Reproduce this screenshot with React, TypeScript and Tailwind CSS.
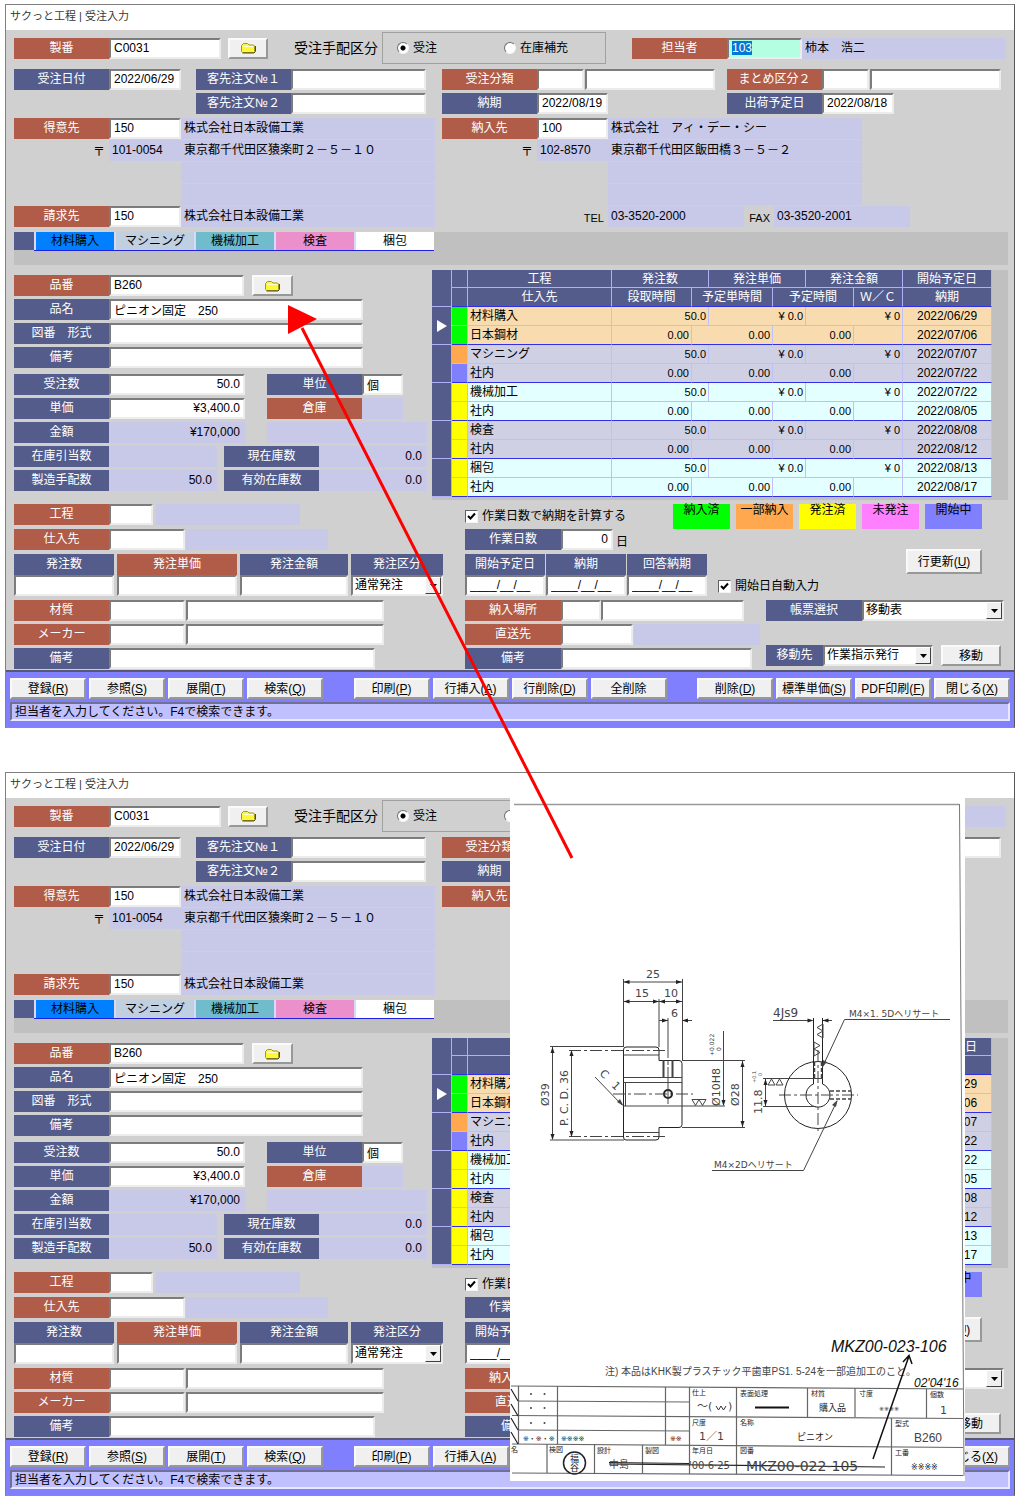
import React, { useEffect, useId, useRef } from 'react';
import clsx from 'clsx';

type Tone = 'navy' | 'red';

const sunken = 'border-2 border-t-[#7c7c7c] border-l-[#7c7c7c] border-r-[#ececec] border-b-[#ececec]';
const raised = 'border-2 border-t-[#fafafa] border-l-[#fafafa] border-r-[#989898] border-b-[#989898]';

const toneClass: Record<Tone, string> = {
  navy: 'bg-[#545c8c]',
  red: 'bg-[#b05c48]',
};

interface BoxProps {
  id?: string;
  name: string;
  value?: string;
  className?: string;
  bg?: string;
}

const Box: React.FC<BoxProps> = ({ id, name, value = '', className, bg = 'bg-white' }) => (
  <input
    id={id}
    aria-label={id ? undefined : name}
    type="text"
    defaultValue={value}
    className={clsx('h-[21px] min-w-0 px-[3px] pb-px text-xs text-black outline-none', sunken, bg, className)}
  />
);

interface FieldProps {
  label: string;
  tone?: Tone;
  value?: string;
  box: string;
  labelWidth?: string;
}

const Field: React.FC<FieldProps> = ({ label, tone = 'navy', value, box, labelWidth = 'w-[95px]' }) => {
  const id = useId();
  return (
    <div className="flex">
      <label
        htmlFor={id}
        className={clsx('flex h-[21px] shrink-0 items-center justify-center pb-px text-white', labelWidth, toneClass[tone])}
      >
        {label}
      </label>
      <Box id={id} name={label} value={value} className={box} />
    </div>
  );
};

const Caption: React.FC<{ tone?: Tone; className?: string; children: React.ReactNode }> = ({
  tone = 'navy',
  className = 'w-[95px]',
  children,
}) => (
  <span className={clsx('flex h-[21px] shrink-0 items-center justify-center pb-px text-white', toneClass[tone], className)}>
    {children}
  </span>
);

const Readout: React.FC<{ className: string; children?: React.ReactNode }> = ({ className, children }) => (
  <span className={clsx('flex h-[21px] items-center bg-[#c8c8e8] pr-[5px] pb-px pl-[3px] whitespace-pre', className)}>
    {children}
  </span>
);

const Button: React.FC<{ className: string; label?: string; children: React.ReactNode }> = ({
  className,
  label,
  children,
}) => (
  <button
    type="button"
    aria-label={label}
    className={clsx('flex shrink-0 items-center justify-center bg-[#f0f0f0] whitespace-nowrap text-black', raised, className)}
  >
    {children}
  </button>
);

const FolderIcon = () => (
  <svg width="15" height="12" viewBox="0 0 15 12">
    <path d="M.5 3.500 2.500 1.500h4l1.500 1.500h4.500l1 1v5.500l-1 1h-11l-1-1z" fill="#fff838" stroke="#a09818" />
    <path d="M1.500 11h11.500l1.500-1.500V4" fill="none" stroke="#50501c" />
    <path d="M2 4.500h10" stroke="#ffffd8" />
  </svg>
);

const Radio: React.FC<{ name: string; label: string; checked?: boolean }> = ({ name, label, checked }) => (
  <label className="flex items-center gap-1">
    <input
      type="radio"
      name={name}
      defaultChecked={checked}
      className="size-3 appearance-none rounded-full border border-t-[#707070] border-l-[#707070] border-r-[#f4f4f4] border-b-[#f4f4f4] bg-white checked:bg-[radial-gradient(circle,#000_0_2px,#fff_3px)]"
    />
    {label}
  </label>
);

const Check: React.FC<{ label: string }> = ({ label }) => (
  <label className="flex items-center gap-1">
    <span className="grid">
      <input
        type="checkbox"
        defaultChecked
        className="col-start-1 row-start-1 size-[13px] appearance-none border border-t-[#606060] border-l-[#606060] border-r-[#f4f4f4] border-b-[#f4f4f4] bg-white"
      />
      <svg className="pointer-events-none col-start-1 row-start-1" width="13" height="13" viewBox="0 0 13 13">
        <path d="M3 6 5.500 8.500l4.500-5" fill="none" stroke="#000" strokeWidth="2" />
      </svg>
    </span>
    {label}
  </label>
);

const Combo: React.FC<{ id?: string; name: string; value: string; className: string }> = ({
  id,
  name,
  value,
  className,
}) => (
  <span className={clsx('relative block', className)}>
    <select
      id={id}
      aria-label={id ? undefined : name}
      className={clsx('block h-[21px] w-full appearance-none bg-white pr-5 pb-px pl-[2px] text-xs outline-none', sunken)}
    >
      <option>{value}</option>
    </select>
    <span
      className={clsx(
        'pointer-events-none absolute top-[2px] right-[2px] flex h-[17px] w-4 items-center justify-center bg-[#f0f0f0]',
        'border border-t-white border-l-white border-r-[#404040] border-b-[#404040]',
      )}
    >
      <svg width="7" height="4" viewBox="0 0 7 4">
        <path d="M0 0h7L3.5 4z" />
      </svg>
    </span>
  </span>
);

const ComboField: React.FC<{ label: string; labelWidth: string; value: string; className: string }> = ({
  label,
  labelWidth,
  value,
  className,
}) => {
  const id = useId();
  return (
    <div className="flex min-w-0">
      <label
        htmlFor={id}
        className={clsx('flex h-[21px] shrink-0 items-center justify-center bg-[#545c8c] pb-px text-white', labelWidth)}
      >
        {label}
      </label>
      <Combo id={id} name={label} value={value} className={className} />
    </div>
  );
};

const StaffField: React.FC<{ active?: boolean }> = ({ active }) => {
  const id = useId();
  const ref = useRef<HTMLInputElement>(null);

  useEffect(() => {
    if (active) ref.current?.select();
  }, [active]);

  return (
    <div className="flex">
      <label htmlFor={id} className="flex h-[21px] w-[95px] items-center justify-center bg-[#b05c48] pb-px text-white">
        担当者
      </label>
      <input
        id={id}
        ref={ref}
        type="text"
        autoFocus={active}
        defaultValue="103"
        className={clsx(
          'h-[21px] w-[75px] bg-[#b4ffe4] px-[3px] pb-px text-xs outline-none selection:bg-[#0078d7] selection:text-white',
          sunken,
        )}
      />
    </div>
  );
};

const tabs = [
  { name: '材料購入', color: 'bg-[#0080ff]' },
  { name: 'マシニング', color: 'bg-[#c0d0e0]' },
  { name: '機械加工', color: 'bg-[#70bccc]' },
  { name: '検査', color: 'bg-[#ec90cc]' },
  { name: '梱包', color: 'bg-white' },
];

const steps = [
  { name: '材料購入', vendor: '日本鋼材', start: '2022/06/29', due: '2022/07/06', a: 'bg-[#00ff00]', b: 'bg-[#00ff00]', row: 'bg-[#f8dcb0]' },
  { name: 'マシニング', vendor: '社内', start: '2022/07/07', due: '2022/07/22', a: 'bg-[#ffa850]', b: 'bg-[#8080ff]', row: 'bg-[#d0d0e4]' },
  { name: '機械加工', vendor: '社内', start: '2022/07/22', due: '2022/08/05', a: 'bg-[#ffff00]', b: 'bg-[#ffff00]', row: 'bg-[#e4ffff]' },
  { name: '検査', vendor: '社内', start: '2022/08/08', due: '2022/08/12', a: 'bg-[#ffff00]', b: 'bg-[#ffff00]', row: 'bg-[#d0d0e4]' },
  { name: '梱包', vendor: '社内', start: '2022/08/13', due: '2022/08/17', a: 'bg-[#ffff00]', b: 'bg-[#ffff00]', row: 'bg-[#e4ffff]' },
];

const legend = [
  { name: '納入済', color: 'bg-[#00ff00]' },
  { name: '一部納入', color: 'bg-[#ffa850]' },
  { name: '発注済', color: 'bg-[#ffff00]' },
  { name: '未発注', color: 'bg-[#ff80ff]' },
  { name: '開始中', color: 'bg-[#8080ff]' },
];

const commands = [
  [['登録', 'R'], ['参照', 'S'], ['展開', 'T'], ['検索', 'Q']],
  [['印刷', 'P'], ['行挿入', 'A'], ['行削除', 'D'], ['全削除', '']],
  [['削除', 'D'], ['標準単価', 'S'], ['PDF印刷', 'F'], ['閉じる', 'X']],
];

const StepTable = () => {
  const th = 'border-r border-b border-[#b0b0f8] p-0 font-normal whitespace-nowrap';
  const thLast = 'border-r border-b border-r-[#b0b0f8] border-b-[#3030e8] p-0 font-normal whitespace-nowrap';
  const top = 'border-r border-b border-[#c0c0f8] py-0';
  const bottom = 'border-r border-b border-r-[#c0c0f8] border-b-[#3030e8] py-0';
  const num = 'pr-[2px] pl-0 text-right text-[11px]';
  return (
    <table className="w-full table-fixed border-separate border-spacing-0 leading-4">
      <colgroup>
        <col className="w-[20px]" />
        <col className="w-[16px]" />
        <col className="w-[144px]" />
        <col className="w-[80px]" />
        <col className="w-[17px]" />
        <col className="w-[64px]" />
        <col className="w-[33px]" />
        <col className="w-[48px]" />
        <col className="w-[49px]" />
        <col className="w-[89px]" />
      </colgroup>
      <thead className="bg-[#545c8c] text-white">
        <tr className="h-[18px]">
          <th rowSpan={2} className={th} />
          <th className={th} />
          <th className={th}>工程</th>
          <th colSpan={2} className={th}>発注数</th>
          <th colSpan={2} className={th}>発注単価</th>
          <th colSpan={2} className={th}>発注金額</th>
          <th className={th}>開始予定日</th>
        </tr>
        <tr className="h-[19px]">
          <th className={thLast} />
          <th className={thLast}>仕入先</th>
          <th className={thLast}>段取時間</th>
          <th colSpan={2} className={thLast}>予定単時間</th>
          <th colSpan={2} className={thLast}>予定時間</th>
          <th className={thLast}>Ｗ／Ｃ</th>
          <th className={thLast}>納期</th>
        </tr>
      </thead>
      {steps.map((s, i) => (
        <tbody key={s.name} className={s.row}>
          <tr className="h-[19px]">
            <td rowSpan={2} className="border-r border-b border-[#b0b0f8] bg-[#545c8c] p-0">
              {i === 0 && (
                <svg className="mx-auto" width="10" height="12" viewBox="0 0 10 12">
                  <path d="M0 0l10 6-10 6z" fill="#fff" />
                </svg>
              )}
            </td>
            <td className={clsx(top, s.a)} />
            <td className={clsx(top, 'px-[2px]')}>{s.name}</td>
            <td colSpan={2} className={clsx(top, num)}>50.0</td>
            <td colSpan={2} className={clsx(top, num)}>¥ 0.0</td>
            <td colSpan={2} className={clsx(top, num)}>¥ 0</td>
            <td className={clsx(top, 'px-0 text-center')}>{s.start}</td>
          </tr>
          <tr className="h-[19px]">
            <td className={clsx(bottom, s.b)} />
            <td className={clsx(bottom, 'px-[2px]')}>{s.vendor}</td>
            <td className={clsx(bottom, num)}>0.00</td>
            <td colSpan={2} className={clsx(bottom, num)}>0.00</td>
            <td colSpan={2} className={clsx(bottom, num)}>0.00</td>
            <td className={bottom} />
            <td className={clsx(bottom, 'px-0 text-center')}>{s.due}</td>
          </tr>
        </tbody>
      ))}
    </table>
  );
};

const OrderWindow: React.FC<{ active?: boolean; children?: React.ReactNode }> = ({ active, children }) => {
  const group = useId();
  return (
    <section className="relative border border-t-[#808080] border-r-[#585858] border-b-[#909090] border-l-[#808080] bg-[#d0d0d0]">
      <header className="flex h-[25px] items-center bg-white pb-1 pl-1 text-[11px] text-[#383838]">
        サクっと工程 | 受注入力
      </header>

      <form className="pt-[2px] pr-[6px] pl-2" onSubmit={(e) => e.preventDefault()}>
        <div className="mr-[3px] flex items-center">
          <Field label="製番" tone="red" value="C0031" box="w-[112px]" />
          <Button label="製番検索" className="ml-[7px] h-[21px] w-10">
            <FolderIcon />
          </Button>
          <span className="ml-[26px] text-sm">受注手配区分</span>
          <div className="ml-1 flex h-8 w-[224px] items-center gap-[67px] border border-[#a0a0a0] pl-[14px]">
            <Radio name={group} label="受注" checked />
            <Radio name={group} label="在庫補充" />
          </div>
          <div className="ml-[26px] flex flex-1">
            <StaffField active={active} />
            <Readout className="flex-1">柿本　浩二</Readout>
          </div>
        </div>

        <div className="mt-[5px] grid grid-cols-[428px_minmax(0,1fr)]">
          <div className="flex flex-col gap-[3px]">
            <div className="flex gap-[15px]">
              <Field label="受注日付" value="2022/06/29" box="w-[72px]" />
              <Field label="客先注文№１" box="w-[135px]" />
            </div>
            <div className="pl-[182px]">
              <Field label="客先注文№２" box="w-[135px]" />
            </div>
          </div>
          <div className="grid grid-cols-[285px_minmax(0,1fr)] gap-y-[3px]">
            <div className="flex gap-px">
              <Field label="受注分類" tone="red" box="w-[47px]" />
              <Box name="受注分類名" className="w-[130px]" />
            </div>
            <div className="mr-[7px] flex gap-px">
              <Field label="まとめ区分２" tone="red" box="w-[47px]" />
              <Box name="まとめ区分名" className="flex-1" />
            </div>
            <Field label="納期" value="2022/08/19" box="w-[71px]" />
            <Field label="出荷予定日" value="2022/08/18" box="w-[72px]" />
          </div>
        </div>

        <div className="mt-1 grid grid-cols-[428px_1fr]">
          <div className="flex flex-col gap-px">
            <div className="flex">
              <Field label="得意先" tone="red" value="150" box="w-[72px]" />
              <Readout className="w-[254px]">株式会社日本設備工業</Readout>
            </div>
            <div className="flex">
              <span className="w-[95px] pt-1 pr-1 text-right">〒</span>
              <Readout className="w-[72px]">101-0054</Readout>
              <Readout className="w-[254px]">東京都千代田区猿楽町２－５－１０</Readout>
            </div>
            <Readout className="ml-[167px] w-[254px]" />
            <Readout className="ml-[167px] w-[254px]" />
            <div className="flex">
              <Field label="請求先" tone="red" value="150" box="w-[72px]" />
              <Readout className="w-[254px]">株式会社日本設備工業</Readout>
            </div>
          </div>
          <div className="flex flex-col gap-px">
            <div className="flex">
              <Field label="納入先" tone="red" value="100" box="w-[71px]" />
              <Readout className="w-[254px]">株式会社　アィ・デー・シー</Readout>
            </div>
            <div className="flex">
              <span className="w-[95px] pt-1 pr-1 text-right">〒</span>
              <Readout className="w-[71px]">102-8570</Readout>
              <Readout className="w-[254px]">東京都千代田区飯田橋３－５－２</Readout>
            </div>
            <Readout className="ml-[166px] w-[254px]" />
            <Readout className="ml-[166px] w-[254px]" />
            <div className="flex">
              <span className="w-[166px] pt-1 pr-1 text-right text-[11px]">TEL</span>
              <Readout className="w-[136px]">03-3520-2000</Readout>
              <span className="w-[30px] pt-1 pr-1 text-right text-[11px]">FAX</span>
              <Readout className="w-[136px]">03-3520-2001</Readout>
            </div>
          </div>
        </div>

        <div className="mt-[5px] flex h-[33px] items-start bg-[#c0c0c0]">
          <span className="h-[18px] w-5 bg-[#545c8c]" />
          <div className="flex border-b border-[#2020e0]">
            {tabs.map((t) => (
              <button
                key={t.name}
                type="button"
                className={clsx('h-[18px] w-20 border-l-2 border-[#d8d8f8] leading-[17px]', t.color)}
              >
                {t.name}
              </button>
            ))}
          </div>
        </div>

        <div className="mt-[5px] grid grid-cols-[418px_1fr]">
          <div className="flex flex-col gap-[3px] pt-[5px]">
            <div className="flex gap-2">
              <Field label="品番" tone="red" value="B260" box="w-[135px]" />
              <Button label="品番検索" className="h-[21px] w-[41px]">
                <FolderIcon />
              </Button>
            </div>
            <Field label="品名" value="ピニオン固定　250" box="w-[254px]" />
            <Field label="図番　形式" box="w-[254px]" />
            <Field label="備考" box="w-[254px]" />
            <div className="mt-[3px] flex gap-[22px]">
              <Field label="受注数" value="50.0" box="w-[136px] text-right" />
              <Field label="単位" value="個" box="w-[41px]" />
            </div>
            <div className="flex gap-[22px]">
              <Field label="単価" value="¥3,400.0" box="w-[136px] text-right" />
              <div className="flex">
                <Caption tone="red">倉庫</Caption>
                <Readout className="w-[41px]" />
              </div>
            </div>
            <div className="flex">
              <Caption>金額</Caption>
              <Readout className="w-[136px] justify-end">¥170,000</Readout>
              <Readout className="ml-[22px] w-[160px]" />
            </div>
            <div className="flex">
              <Caption>在庫引当数</Caption>
              <Readout className="w-[108px]" />
              <Caption className="ml-[7px] w-[95px]">現在庫数</Caption>
              <Readout className="w-[108px] justify-end">0.0</Readout>
            </div>
            <div className="flex">
              <Caption>製造手配数</Caption>
              <Readout className="w-[108px] justify-end">50.0</Readout>
              <Caption className="ml-[7px] w-[95px]">有効在庫数</Caption>
              <Readout className="w-[108px] justify-end">0.0</Readout>
            </div>
          </div>
          <div className="h-[230px] bg-[#c0c0c0] pr-4">
            <StepTable />
          </div>
        </div>

        <div className="mt-1 grid grid-cols-[451px_1fr] pb-px">
          <div className="flex flex-col">
            <div className="flex gap-[3px]">
              <Field label="工程" tone="red" box="w-[44px]" />
              <Readout className="w-[144px]" />
            </div>
            <div className="mt-1 flex gap-px">
              <Field label="仕入先" tone="red" box="w-[76px]" />
              <Readout className="w-[142px]" />
            </div>
            <div className="mt-1 grid grid-cols-[100px_120px_108px_92px] gap-x-[3px]">
              <Caption className="w-full">発注数</Caption>
              <Caption tone="red" className="w-full">発注単価</Caption>
              <Caption className="w-full">発注金額</Caption>
              <Caption className="w-full">発注区分</Caption>
              <Box name="発注数" />
              <Box name="発注単価" />
              <Box name="発注金額" />
              <Combo name="発注区分" value="通常発注" className="w-[92px]" />
            </div>
            <div className="mt-1 flex gap-px">
              <Field label="材質" tone="red" box="w-[76px]" />
              <Box name="材質名" className="w-[198px]" />
            </div>
            <div className="mt-[3px] flex gap-px">
              <Field label="メーカー" tone="red" box="w-[76px]" />
              <Box name="メーカー名" className="w-[198px]" />
            </div>
            <div className="mt-[3px]">
              <Field label="備考" box="w-[266px]" />
            </div>
          </div>

          <div className="flex flex-col">
            <div className="flex h-[25px] items-start justify-between pr-[26px]">
              <div className="pt-1">
                <Check label="作業日数で納期を計算する" />
              </div>
              <ul className="flex gap-[6px]">
                {legend.map((l) => (
                  <li key={l.name} className={clsx('h-[25px] w-[57px] text-center leading-[13px]', l.color)}>
                    {l.name}
                  </li>
                ))}
              </ul>
            </div>
            <div className="flex items-start justify-between pr-[26px]">
              <div className="flex flex-col gap-1">
                <div className="flex items-end gap-[3px]">
                  <Field label="作業日数" value="0" labelWidth="w-[96px]" box="w-[52px] text-right" />
                  <span>日</span>
                </div>
                <div className="flex items-end gap-[11px]">
                  <div className="grid grid-cols-[80px_80px_80px] gap-x-px">
                    <Caption className="w-full">開始予定日</Caption>
                    <Caption className="w-full">納期</Caption>
                    <Caption className="w-full">回答納期</Caption>
                    <Box name="開始予定日" value="____/__/__" />
                    <Box name="納期" value="____/__/__" />
                    <Box name="回答納期" value="____/__/__" />
                  </div>
                  <div className="pb-[2px]">
                    <Check label="開始日自動入力" />
                  </div>
                </div>
              </div>
              <Button className="mt-5 h-[25px] w-[76px]">
                行更新(<u>U</u>)
              </Button>
            </div>
            <div className="mt-1 flex justify-between">
              <div className="flex flex-col gap-[3px]">
                <div className="flex">
                  <Field label="納入場所" tone="red" labelWidth="w-[96px]" box="w-[40px]" />
                  <Box name="納入場所名" className="w-[143px]" />
                </div>
                <div className="flex gap-px">
                  <Field label="直送先" tone="red" labelWidth="w-[96px]" box="w-[72px]" />
                  <Readout className="w-[126px]" />
                </div>
                <Field label="備考" labelWidth="w-[96px]" box="w-[191px]" />
              </div>
              <div className="mr-1 ml-[6px] flex flex-1 flex-col gap-6">
                <ComboField label="帳票選択" labelWidth="w-[96px]" value="移動表" className="flex-1" />
                <div className="flex justify-between">
                  <ComboField label="移動先" labelWidth="w-[57px]" value="作業指示発行" className="w-[110px]" />
                  <Button className="mr-[3px] h-[21px] w-[60px]">移動</Button>
                </div>
              </div>
            </div>
          </div>
        </div>
      </form>

      <footer className="border-t-2 border-[#585870] bg-[#8080ff] px-1 pt-[6px] pb-[6px]">
        <div className="flex justify-between">
          {commands.map((set, i) => (
            <div key={i} className="flex gap-[3px]">
              {set.map(([name, key]) => (
                <Button key={name} className="h-[21px] w-[76px]">
                  {name}
                  {key && (
                    <>
                      (<u>{key}</u>)
                    </>
                  )}
                </Button>
              ))}
            </div>
          ))}
        </div>
        <p className="mt-[3px] flex h-[19px] items-center border-2 border-t-[#707090] border-r-[#e8e8ff] border-b-[#e8e8ff] border-l-[#707090] bg-[#c0c0ff] pl-[3px]">
          担当者を入力してください。F4で検索できます。
        </p>
      </footer>
      {children}
    </section>
  );
};

const Arrow: React.FC<{ x: number; y: number; dir: 'l' | 'r' | 'u' | 'd' }> = ({ x, y, dir }) => {
  const angle = { r: 0, d: 90, l: 180, u: 270 }[dir];
  return <path d="M0 0-6-2v4z" fill="#222" stroke="none" transform={`translate(${x} ${y}) rotate(${angle})`} />;
};

const Up: React.FC<{ x: number; y: number; size?: number; children: React.ReactNode }> = ({ x, y, size = 11, children }) => (
  <text transform={`translate(${x} ${y}) rotate(-90)`} fontSize={size}>
    {children}
  </text>
);

// Part drawing of the pinion, with its title block
const PartDrawing = () => (
  <svg
    className="absolute top-[24px] left-[504px] bg-white"
    width="455"
    height="684"
    viewBox="510 797 455 684"
    fontFamily='"DejaVu Sans", "Noto Sans CJK JP", sans-serif'
    fontSize="11"
    fill="#444"
  >
    <g fill="none" stroke="#444" strokeWidth="1">
      <path d="M514 804.5H959" stroke="#999" strokeWidth="1.5" />
      <path d="M959.5 804 961.5 1100 962.5 1250 964 1476" stroke="#777" />

      {/* side view */}
      <path d="M626 1047H656q3 0 3 3V1060.500H679q3 0 3 3V1124.500q0 3-3 3H659V1137q0 3-3 3H626q-2.500 0-2.500-3V1050q0-3 2.500-3z" stroke="#222" />
      <path d="M623.500 1055H659M623.500 1132.500H659M623.500 1077.500H682M623.500 1082.500H682M625.500 1082.500V1106M623.500 1106H725" />
      <path d="M663.500 1060V1077.500M672.500 1060V1077.500" strokeWidth="2" />
      <circle cx="668" cy="1094" r="4" stroke="#222" strokeWidth="2" />
      <path d="M613 1094H693M569 1050.500H666M569 1136.500H666" strokeDasharray="12 3 3 3" />
      <path d="M668 1018V1104" strokeDasharray="40 2 5 2" />

      {/* dimensions */}
      <path d="M623.500 979V1047M682.500 979V1060M659 999V1047" />
      <path d="M623.500 982H682M623.500 1001.500H682M659 1020.500H668M682 1020.500H692" />
      <path d="M550 1046.500H624M550 1140H624M552.500 1047V1139M571.500 1051V1136" />
      <path d="M595 1077 622 1105M723.500 1031V1105M682 1060.500H745M682 1127.500H745M742.500 1061V1127" />

      {/* front view */}
      <circle cx="818" cy="1095" r="33.500" stroke="#222" />
      <path d="M813.500 1084V1018M822.500 1084V1018M813.500 1084A12 12 0 1 0 822.500 1084" stroke="#222" />
      <path d="M779 1095H858M818 1050V1134" strokeDasharray="12 3 3 3" />
      <path d="M814.500 1062V1078M821.500 1062V1078M830 1091H851M830 1099H851" strokeWidth="1.5" strokeDasharray="4 2" />
      <path d="M773 1020.500H812M823 1020.500H832M763 1078.500H823M763 1106.500H816M765.500 1079V1106" />
      <path d="M950 1019.500H844.500L822.500 1067M712 1170.500H803.500L837 1101" />

      {/* surface marks */}
      <path d="M692 1099.500h7l-3.500 6zM699 1099.500h7l-3.500 6zM768 1085h7l-3.500-6zM776 1085h7l-3.500-6z" />
      <path d="M823 1024v7l-6-3.500zM823 1031v7l-6-3.500zM814 1042v7l6-3.500zM814 1049v7l6-3.500z" />
    </g>

    <Arrow x={623.5} y={982} dir="l" />
    <Arrow x={682} y={982} dir="r" />
    <Arrow x={623.5} y={1001.5} dir="l" />
    <Arrow x={659} y={1001.5} dir="r" />
    <Arrow x={659} y={1001.5} dir="l" />
    <Arrow x={682} y={1001.5} dir="r" />
    <Arrow x={668} y={1020.5} dir="r" />
    <Arrow x={682} y={1020.5} dir="l" />
    <Arrow x={552.5} y={1047} dir="u" />
    <Arrow x={552.5} y={1140} dir="d" />
    <Arrow x={571.5} y={1050} dir="u" />
    <Arrow x={571.5} y={1137} dir="d" />
    <Arrow x={723.5} y={1106} dir="d" />
    <Arrow x={742.5} y={1061} dir="u" />
    <Arrow x={742.5} y={1127} dir="d" />
    <Arrow x={813.5} y={1020.5} dir="r" />
    <Arrow x={822.5} y={1020.5} dir="l" />
    <Arrow x={765.5} y={1079} dir="u" />
    <Arrow x={765.5} y={1106} dir="d" />
    <path d="M623.500 1106 617 1102 620 1099z" />
    <path d="M822.500 1067 823 1060 827 1062z" />
    <path d="M837.500 1100 832 1105 836 1107z" />

    <text x="646" y="978">25</text>
    <text x="635" y="997">15</text>
    <text x="664" y="997">10</text>
    <text x="671" y="1017">6</text>
    <Up x={549} y={1106}>Ø39</Up>
    <Up x={568} y={1126}>P. C. D. 36</Up>
    <text transform="translate(599 1074) rotate(45)">C</text>
    <text transform="translate(611 1086) rotate(45)">1</text>
    <Up x={720} y={1106}>Ø10H8</Up>
    <Up x={714} y={1056} size={6}>+0.022</Up>
    <Up x={721} y={1051} size={6}>0</Up>
    <Up x={739} y={1106}>Ø28</Up>
    <Up x={762} y={1114}>11.8</Up>
    <Up x={756} y={1083} size={5}>+0.1</Up>
    <Up x={762} y={1076} size={5}>0</Up>
    <text x="773" y="1017" fontSize="12">4Js9</text>
    <text x="849" y="1017" fontSize="9">M4×1. 5Dヘリサート</text>
    <text x="714" y="1168" fontSize="9">M4×2Dヘリサート</text>

    <text x="605" y="1375" fontSize="10" fontFamily='"Liberation Sans", "Noto Sans CJK JP", sans-serif'>
      注) 本品はKHK製プラスチック平歯車PS1. 5-24を一部追加工のこと。
    </text>
    <g fontFamily='"Liberation Sans", sans-serif' fontStyle="italic" fill="#111">
      <text x="831" y="1352" fontSize="16">MKZ00-023-106</text>
      <text x="914" y="1387" fontSize="12">02'04'16</text>
    </g>

    {/* title block */}
    <g fill="none" stroke="#666" strokeWidth="1.2">
      <path d="M511 1386 963 1389M518 1401 689 1402M512 1415.500 963 1418.500M518 1430 689 1431M512 1444 963 1447.500M512 1473 963 1475.500" />
      <path d="M518.500 1386V1444M557.500 1386V1444M665.500 1387V1445M689.500 1387V1474M736.500 1387V1474M807.500 1388V1417M855 1388V1417M926.500 1389V1418M891.500 1418V1475M547 1444V1473M594.500 1444V1473M642.500 1445V1474" />
      <path d="M511 1389 518 1401M511 1404 518 1416M511 1418 518 1430M511 1432 518 1444" stroke="#222" />
      <path d="M755 1407.500H789" stroke="#111" strokeWidth="2" />
      <path d="M609 1464 885 1467M609 1462.500 689 1463.500" stroke="#222" />
      <circle cx="574.5" cy="1463" r="11" stroke="#222" strokeWidth="1.5" />
      <path d="M873 1459 909 1356M903 1362 909 1355.500 912 1364" stroke="#111" strokeWidth="1.5" />
    </g>
    <g fontSize="7" fill="#222">
      <text x="692" y="1395">仕上</text>
      <text x="740" y="1396">表面処理</text>
      <text x="811" y="1396">材質</text>
      <text x="859" y="1396">寸度</text>
      <text x="930" y="1397">個数</text>
      <text x="692" y="1425">尺度</text>
      <text x="740" y="1425">名称</text>
      <text x="895" y="1426">型式</text>
      <text x="692" y="1453">年月日</text>
      <text x="740" y="1453">図番</text>
      <text x="895" y="1455">工番</text>
      <text x="511" y="1452">名</text>
      <text x="549" y="1452">検図</text>
      <text x="597" y="1453">設計</text>
      <text x="645" y="1453">製図</text>
      <text x="523" y="1441">※・※・※</text>
      <text x="561" y="1441">※※※※</text>
      <text x="670" y="1441">※※</text>
      <text x="879" y="1411" fontSize="6">※※※※</text>
      <text x="911" y="1470" fontSize="8">※※※※</text>
      <text x="819" y="1411" fontSize="9">購入品</text>
      <text x="797" y="1440" fontSize="9">ピニオン</text>
      <text x="570" y="1462" fontSize="9">福</text>
      <text x="570" y="1471" fontSize="9">谷</text>
    </g>
    <text x="697" y="1410">～(</text>
    <path d="M716 1406l2.500 4 2.500-4 2.500 4 2.500-4" fill="none" stroke="#333" />
    <text x="728" y="1410">)</text>
    <text x="940" y="1414">1</text>
    <text x="699" y="1440">1／1</text>
    <text x="914" y="1442" fontFamily='"Liberation Sans", sans-serif' fontSize="12">B260</text>
    <text x="689" y="1469" fontSize="10">'00·6·25</text>
    <text x="746" y="1471" fontSize="14">MKZ00-022-105</text>
    <text x="609" y="1468" fontSize="10">中島</text>
    {[1394, 1408, 1423].map((y) => (
      <g key={y}>
        <circle cx="531" cy={y} r="1" />
        <circle cx="544.5" cy={y} r="1" />
      </g>
    ))}
  </svg>
);

const App: React.FC = () => {
  return (
    <main className="relative flex flex-col gap-11 bg-white px-[5px] pt-1 pb-1 font-['Liberation_Sans','Noto_Sans_CJK_JP',sans-serif] text-xs leading-4 text-black">
      <OrderWindow active />
      <OrderWindow>
        <PartDrawing />
      </OrderWindow>
      {/* pointer from the item name to its drawing */}
      <svg className="pointer-events-none absolute top-0 left-0" width="600" height="870" viewBox="0 0 600 870">
        <path d="M572 858 302 328" stroke="#f00" strokeWidth="3" />
        <path d="M288 305 317 319 288 334z" fill="#f00" />
      </svg>
    </main>
  );
};

export default App;
